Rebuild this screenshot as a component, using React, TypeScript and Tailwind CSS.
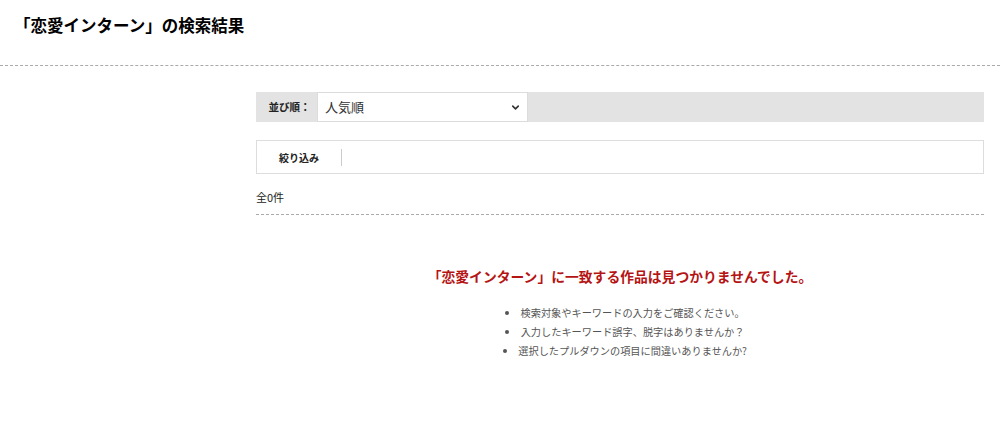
import { ChevronDown } from "lucide-react";

const hints = [
  "検索対象やキーワードの入力をご確認ください。",
  "入力したキーワード誤字、脱字はありませんか？",
  "選択したプルダウンの項目に間違いありませんか?",
];

export default function App() {
  return (
    <div
      className="min-h-[435px] w-full bg-white text-[#222]"
      style={{ fontFamily: '"Noto Sans CJK JP", "Noto Sans", sans-serif' }}
    >
      <div className="border-b border-dashed border-[#aaa] px-[14px] pt-[14px] pb-[28px]">
        <h1 className="text-[16.5px] leading-[23px] font-bold text-black">
          「恋愛インターン」の検索結果
        </h1>
      </div>

      <div className="ml-[256px] w-[728px] pt-[26px]">
        <div className="flex h-[30px] items-stretch bg-[#e3e3e3]">
          <div className="flex w-[61px] items-center justify-center pl-[6px] text-[10.5px] font-bold">
            並び順：
          </div>
          <div className="flex w-[211px] items-center justify-between border border-[#dcdcdc] bg-white pr-[6px] pl-[7px]">
            <span className="text-[13px] text-[#333]">人気順</span>
            <ChevronDown className="h-[11px] w-[11px] text-[#333]" strokeWidth={3.5} />
          </div>
        </div>

        <div className="mt-[18px] flex h-[34px] items-center border border-[#ddd]">
          <div className="flex h-[17px] w-[85px] items-center justify-center border-r border-[#ccc] text-[10px] font-bold">
            絞り込み
          </div>
        </div>

        <div className="mt-[15px] border-b border-dashed border-[#aaa] pb-[9px] text-[11px] leading-[16px]">
          全0件
        </div>

        <div className="pt-[51px] text-center">
          <p className="text-[13.8px] leading-[20px] font-bold text-[#b51414]">
            「恋愛インターン」に一致する作品は見つかりませんでした。
          </p>
          <ul className="mt-[17px] list-inside list-disc text-[10.2px] leading-[19px] text-[#555]">
            {hints.map((h) => (
              <li key={h} className="pl-[10px]">
                {h}
              </li>
            ))}
          </ul>
        </div>
      </div>
    </div>
  );
}
